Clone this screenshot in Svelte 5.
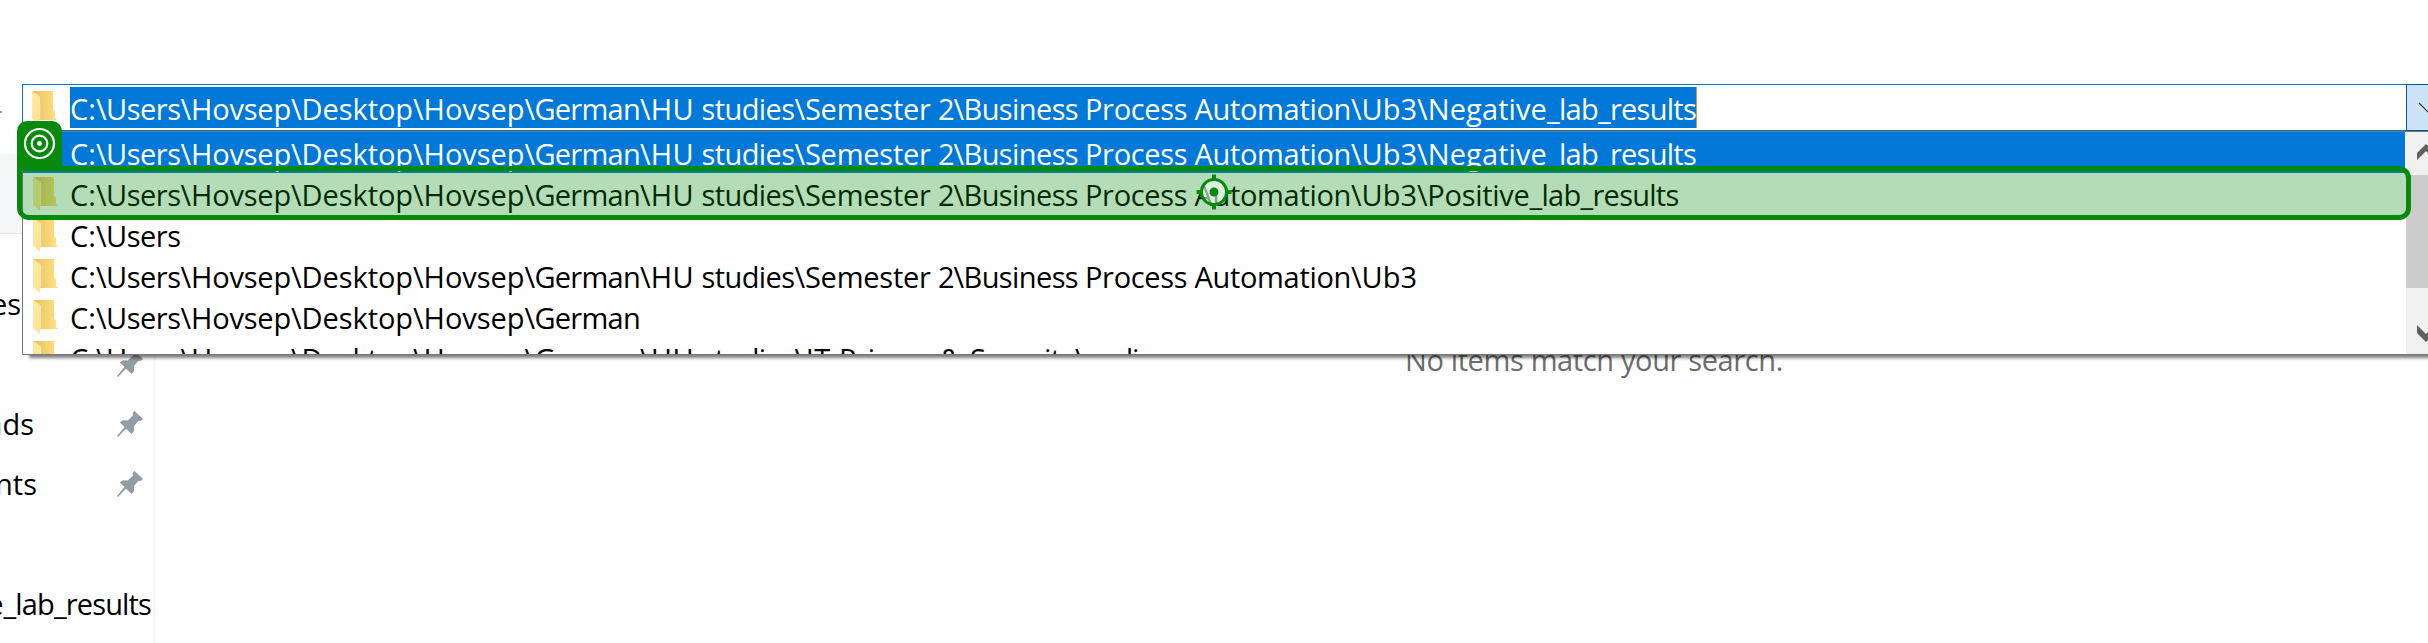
<script>
  const base = [['C:', 26], ['\\Users', 84.5]];
  const german = [...base, ['\\Hovsep', 110.5], ['\\Desktop', 122], ['\\Hovsep', 111.5], ['\\German', 115.5]];
  const hu = [...german, ['\\HU ', 61.5], ['studies', 93]];
  const ub3 = [...hu, ['\\Semester ', 143.5], ['2', 15.5], ['\\Business ', 131.5], ['Process ', 109.5], ['Automation', 156.5], ['\\Ub3', 66]];
  const negative = [...ub3, ['\\Negative', 130], ['_lab', 51], ['_results', 98]];
  const positive = [...ub3, ['\\Positive', 112.5], ['_lab', 51], ['_results', 98]];
  const audio = [...hu, ['\\IT ', 44.5], ['Privacy ', 101], ['& ', 30], ['Security', 105], ['\\audio', 79]];
  const rows = [negative, positive, base, ub3, german, audio];

  const places = [
    { name: 'Pictures', end: 21, pin: false },
    { name: '', end: 21, pin: true },
    { name: 'Downloads', end: 34, pin: true },
    { name: 'Documents', end: 37, pin: true },
    { name: '', end: 37, pin: false },
    { name: 'Negative', tail: '_lab_results', end: 151, pin: false }
  ];

  // Spreads the letters of a segment over its column width.
  function fit(node, width) {
    const natural = node.getBoundingClientRect().width;
    node.style.letterSpacing = (width - natural) / node.textContent.length + 'px';
  }
</script>

{#snippet folder()}
  <svg class="folder" width="25" height="36" viewBox="0 0 25 36">
    <defs>
      <linearGradient id="back" x1="0" x2="1"><stop offset="0.1" stop-color="#e8c25f" /><stop offset="1" stop-color="#ffdf82" /></linearGradient>
      <linearGradient id="flap" x1="0" x2="1" y2="1"><stop offset="0" stop-color="#ffe9a4" /><stop offset="1" stop-color="#fde294" /></linearGradient>
    </defs>
    <path d="M7 29h17l1-.8-2-1z" fill="#ddd" />
    <path d="M0 0h21v18.500l2 2V29H7V6z" fill="url(#back)" />
    <path d="M0 0l8 5.500V28l-1 1v5L0 28z" fill="url(#flap)" />
    <path d="M7.700 6v22.500" stroke="#fff2c5" stroke-width=".8" />
  </svg>
{/snippet}

{#snippet path(parts)}
  <span class="path">{#each parts as [text, width]}<span class="seg" use:fit={width}>{text}</span>{/each}</span>
{/snippet}

<div class="window">
  <header>
    <span class="nav"></span>
    <div class="address">
      <div class="input">
        {@render folder()}
        <div class="selected">{@render path(negative)}</div>
      </div>
      <div class="drop">
        <svg width="21" height="45" viewBox="0 0 21 45"><path d="M12 18l10 10" fill="none" stroke="#333" stroke-width="1.2" /></svg>
      </div>
    </div>
  </header>
  <div class="band"></div>
  <main>
    <nav>
      {#each places as place}
        <div class="place">
          <div class="name" style:width="{place.end}px"><span>{place.name}</span>{#if place.tail}<span use:fit={147.5}>{place.tail}</span>{/if}</div>
          {#if place.pin}
            <svg class="pin" width="26" height="26" viewBox="0 0 26 26"><path d="M17.500 0L26 8l-2.500 2-2-.3-4.500 5.300v5L14.500 23 9 17.800 1 26 0 25l7.500-9L2.700 11.200 6 9.200l4.700.3 5.300-5-.5-2.500z" fill="#929da4" /></svg>
          {/if}
        </div>
      {/each}
    </nav>
    <section><p><span use:fit={378}>No items match your search.</span></p></section>
  </main>

  <div class="popup">
    <div class="list">
      {#each rows as row, i}
        <div class="row" class:active={i === 0}>
          {#if i > 0}{@render folder()}{:else}<span class="folder blank"></span>{/if}
          {@render path(row)}
        </div>
      {/each}
    </div>
    <div class="scroll">
      <svg width="22" height="43" viewBox="0 0 22 43"><path d="M11 21l9-9 9 9v7l-9-9-9 9z" fill="#606060" /></svg>
      <div class="thumb"></div>
      <svg width="22" height="66" viewBox="0 0 22 66"><path d="M11 37l9 9 9-9v8l-9 9-9-9z" fill="#606060" /></svg>
    </div>
  </div>

  <div class="highlight"></div>
  <div class="badge">
    <svg width="45" height="46" viewBox="0 0 45 46" fill="none" stroke="#fff" stroke-width="2.200">
      <circle cx="22.500" cy="22.500" r="14.500" /><circle cx="22.500" cy="22.500" r="7.800" /><circle cx="22.500" cy="22.500" r="2.400" fill="#fff" stroke="none" />
    </svg>
  </div>
  <svg class="cross" width="36" height="36" viewBox="0 0 36 36">
    <circle cx="18" cy="18" r="12.500" fill="#fff" fill-opacity=".55" stroke="#058a0c" stroke-width="3" />
    <path d="M18 .5v6M18 29.500v6M.5 18h6M29.500 18h6" stroke="#058a0c" stroke-width="4" />
    <circle cx="18" cy="18" r="4.500" fill="#058a0c" />
  </svg>
</div>

<style>
  .window { position: relative; width: 2428px; height: 643px; overflow: hidden; background: #fff; color: #000; font: 29px/41px "Open Sans", "Noto Sans", sans-serif; display: flex; flex-direction: column; }
  header { height: 154px; box-sizing: border-box; padding-top: 84px; display: flex; flex: none; }
  .nav { width: 2px; height: 2px; margin: 27px 20px 0 0; background: #999; flex: none; }
  .address { display: flex; flex: 1; height: 47px; }
  .input { width: 2384px; height: 47px; box-sizing: border-box; border: 1px solid #0078d7; border-right: 0; display: flex; align-items: flex-start; flex: none; }
  .input .folder { margin: 6px 13px 0 9px; }
  .selected { width: 1626px; height: 41px; margin-top: 2px; background: #0078d7; color: #fff; border-right: 1px solid #ff8728; overflow: hidden; }
  .drop { box-sizing: border-box; width: 22px; height: 47px; border: 1px solid #005499; border-right: 0; background: #cce4f7; overflow: hidden; }
  .band { height: 79px; background: #f5f6f7; border-bottom: 1px solid #e5e5e5; flex: none; box-sizing: content-box; }
  .path { display: block; white-space: pre; height: 41px; line-height: 43px; }
  .seg { display: inline-block; white-space: pre; font-kerning: none; }
  .folder { display: block; flex: none; }
  main { display: flex; flex: 1; min-height: 0; }
  nav { width: 153px; border-right: 3px solid #f6f6f6; padding-top: 40px; overflow: hidden; flex: none; }
  .place { display: grid; grid-template: 60px / 153px; align-items: center; }
  .name { grid-area: 1 / 1; display: flex; justify-content: flex-end; overflow: hidden; white-space: nowrap; height: 60px; line-height: 60px; }
  .pin { grid-area: 1 / 1; margin: 0 0 0 117px; }
  section { flex: 1; display: flex; }
  p { margin: 105px 0 0 1249px; color: #6d6d6d; white-space: nowrap; }
  .popup { position: absolute; left: 22px; top: 131px; width: 2406px; height: 224px; box-sizing: border-box; border: 1px solid #777; border-right: 0; background: #fff; display: flex; box-shadow: 7px 3px 3px rgba(0, 0, 0, .5); }
  .list { width: 2383px; overflow: hidden; flex: none; }
  .row { display: flex; width: 2382px; height: 41px; color: #000; }
  .row .folder { width: 25px; margin: 4px 12px 0 10px; }
  .row.active { background: #0078d7; color: #fff; }
  .scroll { width: 22px; background: #f0f0f0; display: flex; flex-direction: column; overflow: hidden; flex: none; }
  .scroll svg { display: block; flex: none; }
  .thumb { height: 113px; background: #cdcdcd; flex: none; }
  .highlight { position: absolute; left: 17px; top: 166px; width: 2394px; height: 54px; box-sizing: border-box; border: 5px solid #058a0c; border-radius: 0 12px 12px 12px; background: rgba(5, 138, 12, .3); background-clip: padding-box; }
  .badge { position: absolute; left: 17px; top: 121px; width: 45px; height: 48px; border-radius: 10px 10px 0 0; background: #058a0c; }
  .cross { position: absolute; left: 1196px; top: 174px; }
</style>
